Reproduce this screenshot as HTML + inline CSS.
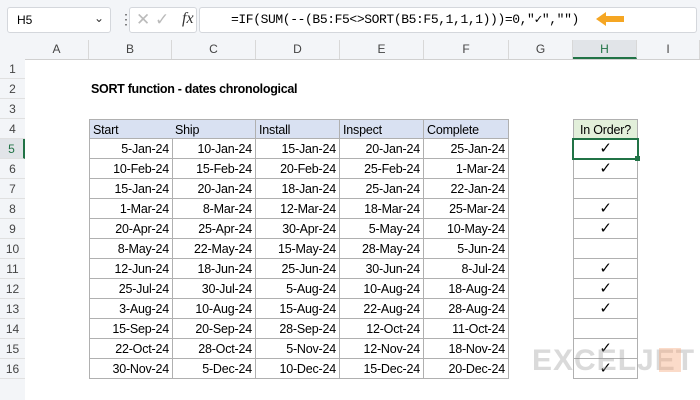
<!DOCTYPE html>
<html><head><style>
body{margin:0;width:700px;height:400px;overflow:hidden;background:#fff;font-family:"Liberation Sans",sans-serif;position:relative}
.top{position:absolute;left:0;top:0;width:700px;height:40px;background:#f3f5f8}
.box{position:absolute;background:#fff;border:1px solid #d4d7dc;border-radius:3px}
.hdr{position:absolute;top:40px;height:19px;background:#f3f5f8;border-bottom:1px solid #d0d0d0}
.ch{position:absolute;top:40px;height:19px;line-height:19px;text-align:center;font-size:12px;color:#444;border-right:1px solid #d8d8d8;box-sizing:border-box}
.rn{position:absolute;left:0;width:25px;height:20px;line-height:20px;text-align:center;font-size:12px;color:#444;background:#f3f5f8;border-bottom:1px solid #e0e0e0;box-sizing:border-box}
.c{position:absolute;height:20px;line-height:20px;font-size:12.5px;letter-spacing:-0.2px;color:#000;box-sizing:border-box;white-space:nowrap;padding:0 3px}
.t{border-right:1px solid #b0b0b0;border-bottom:1px solid #b0b0b0;text-align:right}
</style></head><body>
<div class="top"></div>
<div class="box" style="left:7px;top:7px;width:102px;height:24px"><span style="position:absolute;left:9px;top:5px;font-size:12px">H5</span><span style="position:absolute;left:86px;top:3px;font-size:12px;color:#333">&#8964;</span></div>
<div style="position:absolute;left:119px;top:11px;font-size:14px;color:#555">&#8942;</div>
<div class="box" style="left:129px;top:7px;width:66px;height:24px"><span style="position:absolute;left:6px;top:2px;font-size:17px;color:#bbb">&#10005;</span><span style="position:absolute;left:25px;top:2px;font-size:17px;color:#bbb">&#10003;</span><span style="position:absolute;left:52px;top:2px;font-family:'Liberation Serif',serif;font-style:italic;font-size:16px;color:#333">fx</span></div>
<div class="box" style="left:199px;top:7px;width:496px;height:24px"><span style="position:absolute;left:31px;top:4px;font-family:'Liberation Mono',monospace;font-size:13px;letter-spacing:-0.4px">=IF(SUM(--(B5:F5&lt;&gt;SORT(B5:F5,1,1,1)))=0,"&#10003;","")</span></div>
<svg style="position:absolute;left:594px;top:11px" width="32" height="16"><path d="M2 8 L12 1 L12 5 L30 5 L30 11 L12 11 L12 15 Z" fill="#f5a623"/></svg>
<div class="hdr" style="left:0;width:700px"></div>
<div class="ch" style="left:25px;width:64px">A</div>
<div class="ch" style="left:89px;width:83px">B</div>
<div class="ch" style="left:172px;width:84px">C</div>
<div class="ch" style="left:256px;width:84px">D</div>
<div class="ch" style="left:340px;width:84px">E</div>
<div class="ch" style="left:424px;width:85px">F</div>
<div class="ch" style="left:509px;width:64px">G</div>
<div class="ch" style="left:573px;width:64px;background:#e1e4e8;border-bottom:2px solid #217346;color:#217346">H</div>
<div class="ch" style="left:637px;width:63px">I</div>
<div id="g"></div>
<div style="position:absolute;left:91px;top:79px;height:20px;line-height:20px;font-size:12.5px;font-weight:bold;letter-spacing:-0.3px">SORT function - dates chronological</div>
<script>
var d=[["5-Jan-24","10-Jan-24","15-Jan-24","20-Jan-24","25-Jan-24",1],["10-Feb-24","15-Feb-24","20-Feb-24","25-Feb-24","1-Mar-24",1],["15-Jan-24","20-Jan-24","18-Jan-24","25-Jan-24","22-Jan-24",0],["1-Mar-24","8-Mar-24","12-Mar-24","18-Mar-24","25-Mar-24",1],["20-Apr-24","25-Apr-24","30-Apr-24","5-May-24","10-May-24",1],["8-May-24","22-May-24","15-May-24","28-May-24","5-Jun-24",0],["12-Jun-24","18-Jun-24","25-Jun-24","30-Jun-24","8-Jul-24",1],["25-Jul-24","30-Jul-24","5-Aug-24","10-Aug-24","18-Aug-24",1],["3-Aug-24","10-Aug-24","15-Aug-24","22-Aug-24","28-Aug-24",1],["15-Sep-24","20-Sep-24","28-Sep-24","12-Oct-24","11-Oct-24",0],["22-Oct-24","28-Oct-24","5-Nov-24","12-Nov-24","18-Nov-24",1],["30-Nov-24","5-Dec-24","10-Dec-24","15-Dec-24","20-Dec-24",1]];
var x=[89,172,256,340,424,509],h="";
for(var r=1;r<=16;r++){var y=59+(r-1)*20;h+='<div class="rn" style="top:'+y+'px'+(r==5?';background:#e1e4e8;color:#217346;border-right:2px solid #217346':'')+'">'+r+'</div>';}
h+='<div class="rn" style="top:379px;height:21px;border:none"></div>';
var hd=["Start","Ship","Install","Inspect","Complete"];
for(var i=0;i<5;i++)h+='<div class="c t" style="left:'+x[i]+'px;top:119px;width:'+(x[i+1]-x[i]+(i==0?1:0))+'px;text-align:left;background:#d9e1f2;border-top:1px solid #b0b0b0'+(i==0?';border-left:1px solid #b0b0b0':'')+'">'+hd[i]+'</div>';
h+='<div class="c t" style="left:573px;top:119px;width:65px;text-align:center;background:#e2efda;border-top:1px solid #b0b0b0;border-left:1px solid #b0b0b0;padding:0">In Order?</div>';
for(var r=0;r<12;r++){var y=139+r*20;for(var i=0;i<5;i++)h+='<div class="c t" style="left:'+x[i]+'px;top:'+y+'px;width:'+(x[i+1]-x[i]+(i==0?1:0))+'px'+(i==0?';border-left:1px solid #b0b0b0':'')+'">'+d[r][i]+'</div>';
h+='<div class="c t" style="left:573px;top:'+y+'px;width:65px;text-align:center;border-left:1px solid #b0b0b0;font-size:15px">'+(d[r][5]?'&#10003;':'')+'</div>';}
h+='<div style="position:absolute;left:572px;top:138px;width:67px;height:22px;border:2px solid #217346;box-sizing:border-box"></div><div style="position:absolute;left:635px;top:156px;width:5px;height:5px;background:#217346"></div>';
document.getElementById('g').innerHTML=h;
</script>
<div style="position:absolute;left:532px;top:344px;font-size:30px;font-weight:bold;color:rgba(150,150,150,0.35);letter-spacing:1px">EXCELJET</div>
<div style="position:absolute;left:659px;top:348px;width:22px;height:24px;background:rgba(245,166,120,0.4)"></div>
</body></html>
